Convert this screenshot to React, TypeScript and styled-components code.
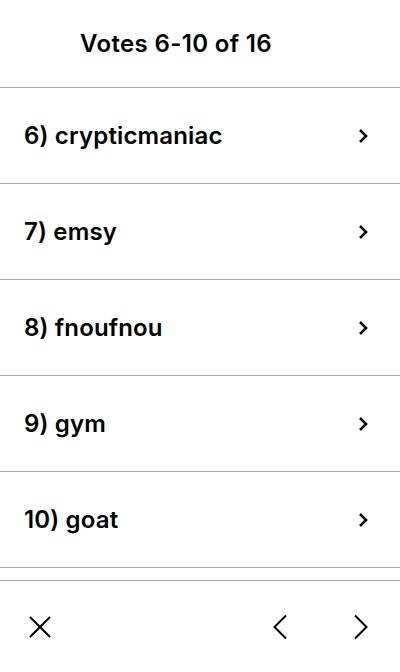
import React from "react"
import styled, { createGlobalStyle } from "styled-components"

const GlobalStyle = createGlobalStyle`
    html, body {
        margin: 0;
        padding: 0;
        background: #fff;
    }
    body {
        font-family: "Inter", "Liberation Sans", sans-serif;
        color: #000;
    }
`

const Screen = styled.div`
    width: 400px;
    height: 672px;
    display: flex;
    flex-direction: column;
    overflow: hidden;
`

const Header = styled.header`
    height: 87px;
    flex-shrink: 0;
    display: flex;
    align-items: center;
    padding-left: 80px;
    border-bottom: 1px solid #aaa;
`

const Title = styled.h1`
    margin: 0;
    font-size: 24px;
    font-weight: 600;
    letter-spacing: 0.35px;
`

const List = styled.ul`
    list-style: none;
    margin: 0;
    padding: 0;
    flex-grow: 1;
    overflow: hidden;
`

const Row = styled.li`
    height: 95px;
    display: flex;
    align-items: center;
    justify-content: space-between;
    padding: 0 32px 0 24px;
    border-bottom: 1px solid #aaa;
    font-size: 24px;
    font-weight: 600;
    letter-spacing: 0.15px;
`

const Footer = styled.footer`
    height: 91px;
    flex-shrink: 0;
    display: flex;
    align-items: center;
    padding: 0 30px 0 28px;
    border-top: 1px solid #aaa;
`

const FooterSpacer = styled.div`
    flex-grow: 1;
`

const IconButton = styled.button<{ $gap?: number }>`
    border: 0;
    background: none;
    padding: 0;
    margin-left: ${(p) => p.$gap ?? 0}px;
    display: flex;
    align-items: center;
    justify-content: center;
    color: #000;
`

const SmallChevron = () => (
    <svg width="10" height="16" viewBox="0 0 10 16" fill="none">
        <path d="M2 2 L8 8 L2 14" stroke="currentColor" strokeWidth="2.6" />
    </svg>
)

const Close = () => (
    <svg width="24" height="24" viewBox="0 0 24 24" fill="none">
        <path d="M2 2 L22 22 M22 2 L2 22" stroke="currentColor" strokeWidth="2" />
    </svg>
)

const BigChevron = (props: { left?: boolean }) => (
    <svg width="18" height="26" viewBox="0 0 18 26" fill="none">
        <path
            d={props.left ? "M14 1.5 L2.5 13 L14 24.5" : "M3 1.5 L14.5 13 L3 24.5"}
            stroke="currentColor"
            strokeWidth="2"
        />
    </svg>
)

const votes = ["crypticmaniac", "emsy", "fnoufnou", "gym", "goat"]

const App = () => {
    return (
        <Screen>
            <GlobalStyle />
            <Header>
                <Title>Votes 6-10 of 16</Title>
            </Header>
            <List>
                {votes.map((name, i) => (
                    <Row key={name}>
                        <span>
                            {i + 6}) {name}
                        </span>
                        <SmallChevron />
                    </Row>
                ))}
            </List>
            <Footer>
                <IconButton>
                    <Close />
                </IconButton>
                <FooterSpacer />
                <IconButton>
                    <BigChevron left />
                </IconButton>
                <IconButton $gap={62}>
                    <BigChevron />
                </IconButton>
            </Footer>
        </Screen>
    )
}

export default App
